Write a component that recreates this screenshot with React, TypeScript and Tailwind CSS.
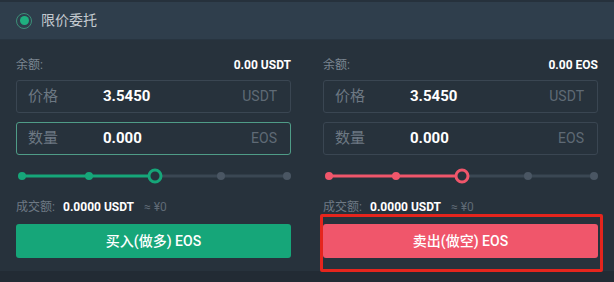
import React from "react"

const font = { fontFamily: "Roboto, 'Noto Sans CJK SC', sans-serif" }

interface SideProps {
  balance: string
  qtyFocused?: boolean
  color: string
  buttonClass: string
  buttonLabel: string
}

const Slider = ({ color }: { color: string }) => {
  const xs = [6, 73, 139, 205, 271]
  return (
    <svg width="277" height="18" viewBox="0 0 277 18" className="block">
      <line x1="6" y1="9" x2="139" y2="9" stroke={color} strokeWidth="3" />
      <line x1="139" y1="9" x2="271" y2="9" stroke="#3a4753" strokeWidth="3" />
      {xs.map((x, i) =>
        i === 2 ? null : (
          <circle key={x} cx={x} cy="9" r="4" fill={i < 2 ? color : "#4a5663"} />
        )
      )}
      <circle cx="139" cy="9" r="6" fill="#27323c" stroke={color} strokeWidth="3" />
    </svg>
  )
}

const Field = ({ label, value, unit, focused }: { label: string; value: string; unit: string; focused?: boolean }) => (
  <div
    className={`flex h-[33px] items-center rounded-[3px] border pl-[11px] pr-[13px] ${
      focused ? "border-[#4f9c87]" : "border-[#3a4652]"
    }`}
  >
    <span className="w-[75px] text-[15px] text-[#6d7883]">{label}</span>
    <span className="flex-1 text-[15px] font-bold text-white">{value}</span>
    <span className="text-[14px] text-[#5f6a75]">{unit}</span>
  </div>
)

const Side = ({ balance, qtyFocused, color, buttonClass, buttonLabel }: SideProps) => (
  <div className="flex w-[275px] flex-col">
    <div className="flex h-[16px] items-center justify-between">
      <span className="text-[12px] text-[#7b8691]">余额:</span>
      <span className="text-[12px] font-bold text-white">{balance}</span>
    </div>
    <div className="mt-[7px]">
      <Field label="价格" value="3.5450" unit="USDT" />
    </div>
    <div className="mt-[9px]">
      <Field label="数量" value="0.000" unit="EOS" focused={qtyFocused} />
    </div>
    <div className="mt-[12px]">
      <Slider color={color} />
    </div>
    <div className="mt-[14px] flex h-[16px] items-center text-[12px]">
      <span className="w-[47px] text-[#6e7984]">成交额:</span>
      <span className="font-bold text-white">0.0000 USDT</span>
      <span className="ml-[10px] text-[#5f6a75]">≈ ¥0</span>
    </div>
    <button
      className={`mt-[9px] flex h-[34px] items-center justify-center rounded-[3px] text-[14px] font-medium text-white ${buttonClass}`}
    >
      {buttonLabel}
    </button>
  </div>
)

export default function App() {
  return (
    <div className="relative h-[282px] w-[614px] overflow-hidden bg-[#222b34]" style={font}>
      <div className="border-t-2 border-[#26313c] bg-[#2f3e4c]">
        <div className="flex h-[38px] items-center gap-[9px] border-b border-[#283541] pl-4">
          <span className="flex h-[16px] w-[16px] items-center justify-center rounded-full border-[1.5px] border-[#3c8f78]">
            <span className="h-[9px] w-[9px] rounded-full bg-[#1fb07f]" />
          </span>
          <span className="text-[14px] text-[#c3c9cf]">限价委托</span>
        </div>
      </div>
      <div className="flex h-[231px] justify-between bg-[#27323c] px-4 pt-[17px]">
        <Side
          balance="0.00 USDT"
          qtyFocused
          color="#16a679"
          buttonClass="bg-[#16a679]"
          buttonLabel="买入(做多) EOS"
        />
        <Side
          balance="0.00 EOS"
          color="#f0566b"
          buttonClass="bg-[#f0566b]"
          buttonLabel="卖出(做空) EOS"
        />
      </div>
      <div className="pointer-events-none absolute left-[320px] top-[214px] h-[58px] w-[283px] rounded-[2px] border-[3px] border-[#e5251d]" />
    </div>
  )
}
